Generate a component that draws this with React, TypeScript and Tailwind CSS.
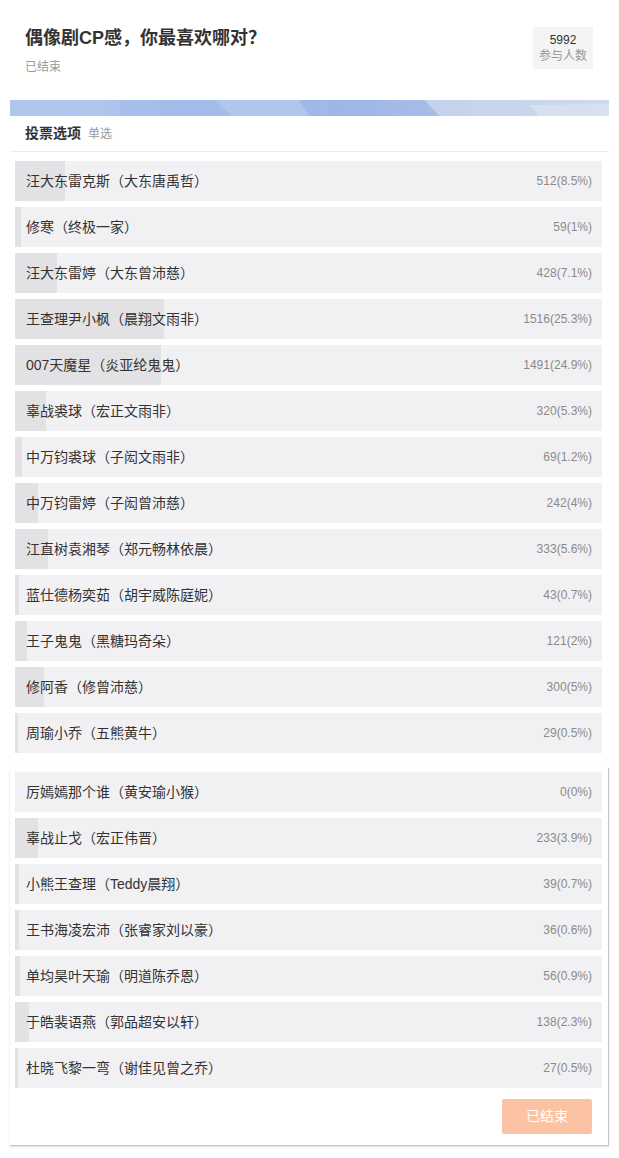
import React from "react";

interface PollOption {
  name: string;
  votes: number;
  pct: number;
}

const firstGroup: PollOption[] = [
  { name: "汪大东雷克斯（大东唐禹哲）", votes: 512, pct: 8.5 },
  { name: "修寒（终极一家）", votes: 59, pct: 1 },
  { name: "汪大东雷婷（大东曾沛慈）", votes: 428, pct: 7.1 },
  { name: "王查理尹小枫（晨翔文雨非）", votes: 1516, pct: 25.3 },
  { name: "007天魔星（炎亚纶鬼鬼）", votes: 1491, pct: 24.9 },
  { name: "辜战裘球（宏正文雨非）", votes: 320, pct: 5.3 },
  { name: "中万钧裘球（子闳文雨非）", votes: 69, pct: 1.2 },
  { name: "中万钧雷婷（子闳曾沛慈）", votes: 242, pct: 4 },
  { name: "江直树袁湘琴（郑元畅林依晨）", votes: 333, pct: 5.6 },
  { name: "蓝仕德杨奕茹（胡宇威陈庭妮）", votes: 43, pct: 0.7 },
  { name: "王子鬼鬼（黑糖玛奇朵）", votes: 121, pct: 2 },
  { name: "修阿香（修曾沛慈）", votes: 300, pct: 5 },
  { name: "周瑜小乔（五熊黄牛）", votes: 29, pct: 0.5 },
];

const secondGroup: PollOption[] = [
  { name: "厉嫣嫣那个谁（黄安瑜小猴）", votes: 0, pct: 0 },
  { name: "辜战止戈（宏正伟晋）", votes: 233, pct: 3.9 },
  { name: "小熊王查理（Teddy晨翔）", votes: 39, pct: 0.7 },
  { name: "王书海凌宏沛（张睿家刘以豪）", votes: 36, pct: 0.6 },
  { name: "单均昊叶天瑜（明道陈乔恩）", votes: 56, pct: 0.9 },
  { name: "于皓裴语燕（郭品超安以轩）", votes: 138, pct: 2.3 },
  { name: "杜晓飞黎一弯（谢佳见曾之乔）", votes: 27, pct: 0.5 },
];

function OptionRow({ name, votes, pct }: PollOption) {
  return (
    <div className="relative h-[40px] bg-[#f1f1f3] flex items-center justify-between pl-[11px] pr-[10px] overflow-hidden">
      {/* result bar, width from the vote share */}
      <div className="absolute left-0 top-0 bottom-0 bg-[#e2e2e4]" style={{ width: `${pct}%` }} />
      <span className="relative text-[14px] text-[#333]">{name}</span>
      <span className="relative text-[12px] text-[#8a8a8a]">
        {votes}({pct}%)
      </span>
    </div>
  );
}

function Banner() {
  return (
    <div className="h-[16px] mx-[10px] bg-gradient-to-r from-[#a9c2ec] via-[#9fb8e7] to-[#d3ddef] overflow-hidden">
      <svg viewBox="0 0 600 16" preserveAspectRatio="none" className="w-full h-full">
        <polygon points="0,0 110,0 110,16 0,16" fill="#b4cbef" opacity="0.55" />
        <polygon points="205,0 290,0 300,16 222,16" fill="#b9cff0" opacity="0.6" />
        <polygon points="318,0 415,0 430,16 318,16" fill="#98b1e4" opacity="0.5" />
        <polygon points="415,0 600,0 600,16 430,16" fill="#cbd7ee" opacity="0.7" />
        <polygon points="520,5 600,4 600,16 530,16" fill="#d9e2f1" opacity="0.8" />
      </svg>
    </div>
  );
}

export default function App() {
  return (
    <div
      className="w-[619px] h-[1158px] bg-white"
      style={{ fontFamily: '"Liberation Sans", "Noto Sans CJK SC", sans-serif' }}
    >
      <div className="h-[100px] flex justify-between pl-[25px] pr-[26px] pt-[26px]">
        <div>
          <h1 className="text-[18px] leading-6 font-bold text-[#333]">偶像剧CP感，你最喜欢哪对？</h1>
          <div className="mt-[9px] text-[12px] leading-4 text-[#999]">已结束</div>
        </div>
        <div className="mt-[1px] w-[60px] h-[42px] bg-[#f4f4f4] flex flex-col items-center justify-center">
          <div className="text-[12px] leading-4 text-[#333]">5992</div>
          <div className="text-[12px] leading-4 text-[#999]">参与人数</div>
        </div>
      </div>

      <Banner />

      <div className="mx-[10px]">
        <div className="h-[36px] flex items-center gap-[7px] pl-[15px] border-b border-[#ececec]">
          <span className="text-[14px] font-bold text-[#333]">投票选项</span>
          <span className="text-[12px] text-[#999]">单选</span>
        </div>

        <div className="flex flex-col gap-[6px] pl-[5px] pr-[7px] pt-[9px]">
          {firstGroup.map((o) => (
            <OptionRow key={o.name} {...o} />
          ))}
        </div>

        <div className="mt-[15px] border-r border-b border-[#c8c8c8] shadow-[0_1px_2px_rgba(0,0,0,0.12)] pt-[4px] pb-[11px]">
          <div className="flex flex-col gap-[6px] pl-[5px] pr-[6px]">
            {secondGroup.map((o) => (
              <OptionRow key={o.name} {...o} />
            ))}
          </div>
          <div className="flex justify-end pr-[16px] mt-[11px]">
            <button className="w-[90px] h-[35px] rounded-[2px] bg-[#fbc3a3] text-white text-[14px]">已结束</button>
          </div>
        </div>
      </div>
    </div>
  );
}
